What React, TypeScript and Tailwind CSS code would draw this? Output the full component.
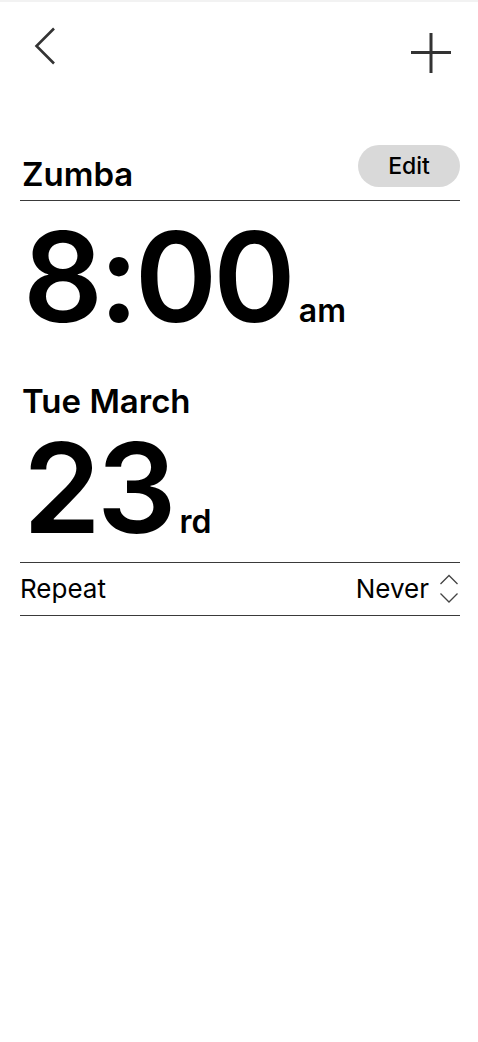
import { ReactNode } from 'react';

function BackIcon() {
    return (
        <svg viewBox="0 0 22 38" className="h-[38px] w-[22px]" fill="none">
            <path d="M20 1.5 2.5 19 20 36.5" stroke="#333" strokeWidth="2.6" />
        </svg>
    );
}

function PlusIcon() {
    return (
        <svg viewBox="0 0 40 40" className="h-[40px] w-[40px]" fill="none">
            <path d="M20 0v40M0 19.5h40" stroke="#333" strokeWidth="3" />
        </svg>
    );
}

function UpDownIcon() {
    return (
        <svg viewBox="0 0 20 32" className="h-[32px] w-[20px]" fill="none">
            <path d="M1.5 11 10 2.5 18.5 11M1.5 20.5 10 29 18.5 20.5" stroke="#444" strokeWidth="1.3" />
        </svg>
    );
}

function BigValue({ value, suffix }: { value: string; suffix: ReactNode }) {
    return (
        <div className="flex items-baseline">
            <span className="text-[125px] font-semibold leading-none tracking-[-4px]">{value}</span>
            <span className="ml-[7px] text-[32px] font-semibold leading-none">{suffix}</span>
        </div>
    );
}

export default function App() {
    return (
        <div className="min-h-screen w-full border-t-2 border-[#f2f2f2] bg-white text-black [font-family:Inter,'Noto_Sans',sans-serif]">
            <header className="flex items-start justify-between pl-[34px] pr-[27px] pt-[25px]">
                <BackIcon />
                <div className="mt-[6px]">
                    <PlusIcon />
                </div>
            </header>

            <main className="pl-5 pr-[18px]">
                <div className="mt-[72px] flex items-end justify-between border-b-[1.5px] border-[#3a3a3a] pb-[13px]">
                    <h1 className="mb-[-4px] pl-[2px] text-[33px] font-semibold leading-none">Zumba</h1>
                    <button className="flex h-[42px] w-[102px] items-center justify-center rounded-full bg-[#d9d9d9] text-[23px] font-medium">
                        Edit
                    </button>
                </div>

                <div className="mt-[13px] pl-[3px]">
                    <BigValue value="8:00" suffix="am" />
                </div>

                <h2 className="mt-[46px] pl-[2px] text-[33px] font-semibold leading-none">Tue March</h2>
                <div className="mt-[7px] pl-[3px]">
                    <BigValue value="23" suffix="rd" />
                </div>

                <div className="mt-[12px] flex h-[54px] items-center justify-between border-y-[1.5px] border-[#3a3a3a]">
                    <span className="text-[26px] leading-none">Repeat</span>
                    <span className="flex items-center">
                        <span className="text-[26px] leading-none">Never</span>
                        <span className="ml-[10px] mr-[1px]">
                            <UpDownIcon />
                        </span>
                    </span>
                </div>
            </main>
        </div>
    );
}
